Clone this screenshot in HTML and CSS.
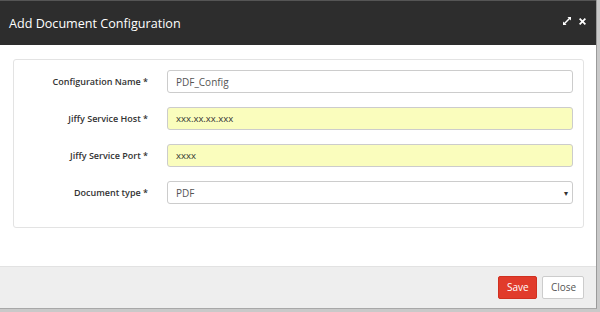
FILE: index.html
```html
<!DOCTYPE html>
<html>
<head>
<meta charset="utf-8">
<link rel="stylesheet" href="styles.css">
</head>
<body>
<div class="modal">
  <div class="modal-header">
    <h1 class="title">Add Document Configuration</h1>
    <div class="tools">
      <svg class="ico" width="8" height="8" viewBox="0 0 9 9"><path d="M5 0H9V4L7.6 2.6 2.6 7.6 4 9H0V5L1.4 6.4 6.4 1.4Z" fill="#fff"/></svg>
      <svg class="ico" width="7" height="7" viewBox="0 0 8 8"><path d="M1.4 0 4 2.6 6.6 0 8 1.4 5.4 4 8 6.6 6.6 8 4 5.4 1.4 8 0 6.6 2.6 4 0 1.4Z" fill="#fff"/></svg>
    </div>
  </div>
  <div class="modal-body">
    <div class="panel">
      <div class="row">
        <label class="lbl">Configuration Name *</label>
        <div class="field">PDF_Config</div>
      </div>
      <div class="row">
        <label class="lbl">Jiffy Service Host *</label>
        <div class="field auto">xxx.xx.xx.xxx</div>
      </div>
      <div class="row">
        <label class="lbl">Jiffy Service Port *</label>
        <div class="field auto">xxxx</div>
      </div>
      <div class="row">
        <label class="lbl">Document type *</label>
        <div class="field select"><span>PDF</span><span class="caret">&#9662;</span></div>
      </div>
    </div>
  </div>
  <div class="modal-footer">
    <button class="btn btn-save">Save</button>
    <button class="btn btn-close">Close</button>
  </div>
</div>
</body>
</html>
```

FILE: styles.css
```css
html, body {
  margin: 0;
  padding: 0;
}
body {
  width: 600px;
  height: 312px;
  background: #c9c9c9;
  font-family: "Open Sans", "Noto Sans", sans-serif;
  overflow: hidden;
}
.modal {
  width: 596px;
  height: 308px;
  background: #fff;
  border-right: 1px solid #9a9a9a;
  border-bottom: 1px solid #a8a8a8;
  display: flex;
  flex-direction: column;
}
.modal-header {
  height: 45px;
  background: #2d2d2d;
  border-top: 1px solid #555;
  box-sizing: border-box;
  display: flex;
  align-items: center;
  justify-content: space-between;
  padding: 0 10px 0 9px;
}
.title {
  margin: 0;
  color: #fff;
  font-size: 12.6px;
  font-weight: 400;
}
.tools {
  display: flex;
  align-items: center;
  gap: 8px;
  margin-bottom: 4px;
}
.ico { display: block; }
.modal-body {
  flex: 1;
  padding: 14px 12px 0 13px;
}
.panel {
  border: 1px solid #e3e3e3;
  border-radius: 3px;
  padding: 10px 10px 23px 0;
  display: flex;
  flex-direction: column;
  gap: 14px;
}
.row {
  display: flex;
  align-items: center;
}
.lbl {
  width: 134px;
  text-align: right;
  font-size: 9px;
  font-weight: 600;
  color: #333;
  padding-right: 19px;
  flex: none;
}
.field {
  flex: 1;
  height: 23px;
  box-sizing: border-box;
  border: 1px solid #ccc;
  border-radius: 3px;
  padding: 0 8px;
  display: flex;
  align-items: center;
  font-size: 10px;
  color: #555;
}
.field.auto {
  background: #fafdbd;
  color: #333;
  font-size: 9.5px;
}
.field.select {
  justify-content: space-between;
  padding-right: 4px;
}
.caret {
  font-size: 8px;
  color: #333;
}
.modal-footer {
  height: 42px;
  box-sizing: border-box;
  background: #eee;
  border-top: 1px solid #e2e2e2;
  display: flex;
  align-items: center;
  justify-content: flex-end;
  gap: 5px;
  padding: 0 12px 1px 0;
}
.btn {
  height: 23px;
  box-sizing: border-box;
  border-radius: 2px;
  font-family: "Open Sans", "Noto Sans", sans-serif;
  font-size: 10px;
  padding: 0 8px;
  cursor: pointer;
}
.btn-save {
  background: #e13b2b;
  border: 1px solid #d03020;
  color: #fff;
  width: 39px;
}
.btn-close {
  background: #fff;
  border: 1px solid #ccc;
  color: #555;
  width: 42px;
}
```
